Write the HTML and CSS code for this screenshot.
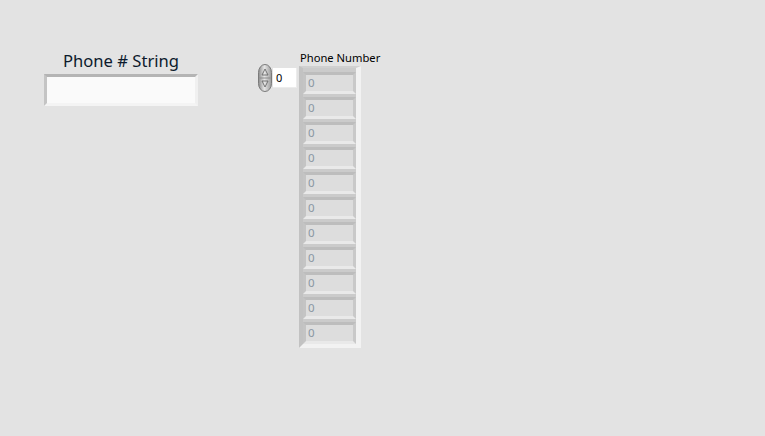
FILE: index.html
```html
<!DOCTYPE html>
<html>
<head>
<meta charset="utf-8">
<link rel="stylesheet" href="styles.css">
</head>
<body>
<div class="panel">
  <div class="strctl">
    <div class="strlabel">Phone # String</div>
    <div class="strbox"><div class="strinner"></div></div>
  </div>
  <div class="arrctl">
    <div class="arrlabel">Phone Number</div>
    <div class="arrrow">
      <div class="index">
        <svg class="spin" width="14" height="28" viewBox="0 0 14 28">
          <defs>
            <linearGradient id="g" x1="0" y1="0" x2="1" y2="0">
              <stop offset="0" stop-color="#8c8c8c"/>
              <stop offset="0.45" stop-color="#e6e6e6"/>
              <stop offset="1" stop-color="#9a9a9a"/>
            </linearGradient>
          </defs>
          <rect x="0.5" y="0.5" width="13" height="27" rx="6.5" ry="8" fill="url(#g)" stroke="#7a7a7a"/>
          <line x1="1.5" y1="14" x2="12.5" y2="14" stroke="#8a8a8a"/>
          <path d="M7 5 L10 11 L4 11 Z" fill="none" stroke="#6a6a6a" stroke-width="0.9"/>
          <path d="M7 23 L10 17 L4 17 Z" fill="none" stroke="#6a6a6a" stroke-width="0.9"/>
        </svg>
        <div class="idxbox">0</div>
      </div>
      <div class="frame">
        <div class="el"><span>0</span></div>
        <div class="el"><span>0</span></div>
        <div class="el"><span>0</span></div>
        <div class="el"><span>0</span></div>
        <div class="el"><span>0</span></div>
        <div class="el"><span>0</span></div>
        <div class="el"><span>0</span></div>
        <div class="el"><span>0</span></div>
        <div class="el"><span>0</span></div>
        <div class="el"><span>0</span></div>
        <div class="el"><span>0</span></div>
      </div>
    </div>
  </div>
</div>
</body>
</html>
```
FILE: styles.css
```css
html, body {
  margin: 0;
  padding: 0;
  background: #e3e3e3;
  width: 765px;
  height: 436px;
  overflow: hidden;
  font-family: "Noto Sans", "Open Sans", sans-serif;
}
.panel {
  display: flex;
  align-items: flex-start;
  padding: 48px 0 0 44px;
}
.strctl {
  display: flex;
  flex-direction: column;
  width: 154px;
}
.strlabel {
  text-align: center;
  font-size: 16.6px;
  line-height: 24px;
  padding-top: 1px;
  color: #0c1a2c;
  height: 25px;
}
.strbox {
  width: 154px;
  height: 32px;
  box-sizing: border-box;
  border-top: 3px solid #b4b4b4;
  border-left: 3px solid #c4c4c4;
  border-bottom: 3px solid #f4f4f4;
  border-right: 3px solid #f0f0f0;
  background: #fafafa;
}
.arrctl {
  margin-left: 60px;
  margin-top: 2px;
  display: flex;
  flex-direction: column;
}
.arrlabel {
  margin-left: 42px;
  font-size: 11.2px;
  line-height: 14px;
  padding-top: 1px;
  height: 13px;
  color: #000;
}
.arrrow {
  display: flex;
  align-items: flex-start;
  gap: 2px;
}
.index {
  display: flex;
  align-items: flex-start;
  gap: 1px;
}
.spin {
  display: block;
}
.idxbox {
  margin-top: 4px;
  width: 24px;
  height: 20px;
  box-sizing: border-box;
  background: #ffffff;
  border-right: 1px solid #ececec;
  border-bottom: 1px solid #ececec;
  font-size: 11px;
  line-height: 19px;
  padding-left: 3px;
  color: #000;
}
.frame {
  margin-top: 2px;
  width: 62px;
  height: 282px;
  box-sizing: border-box;
  border-top: 2px solid #d0d0d0;
  border-left: 4px solid #c2c2c2;
  border-right: 5px solid #f2f2f2;
  border-bottom: 4px solid #f2f2f2;
  background: #cbcbcb;
  padding: 4px 0 0 0;
  display: flex;
  flex-direction: column;
  gap: 3px;
}
.el {
  width: 53px;
  height: 22px;
  box-sizing: border-box;
  border-top: 3px solid #bdbdbd;
  border-left: 3px solid #c4c4c4;
  border-right: 3px solid #c9c9c9;
  border-bottom: 3px solid #e9e9e9;
  background: #dddddd;
  font-size: 11.5px;
  line-height: 16px;
  padding-left: 2px;
  color: #8a97a3;
}
```
